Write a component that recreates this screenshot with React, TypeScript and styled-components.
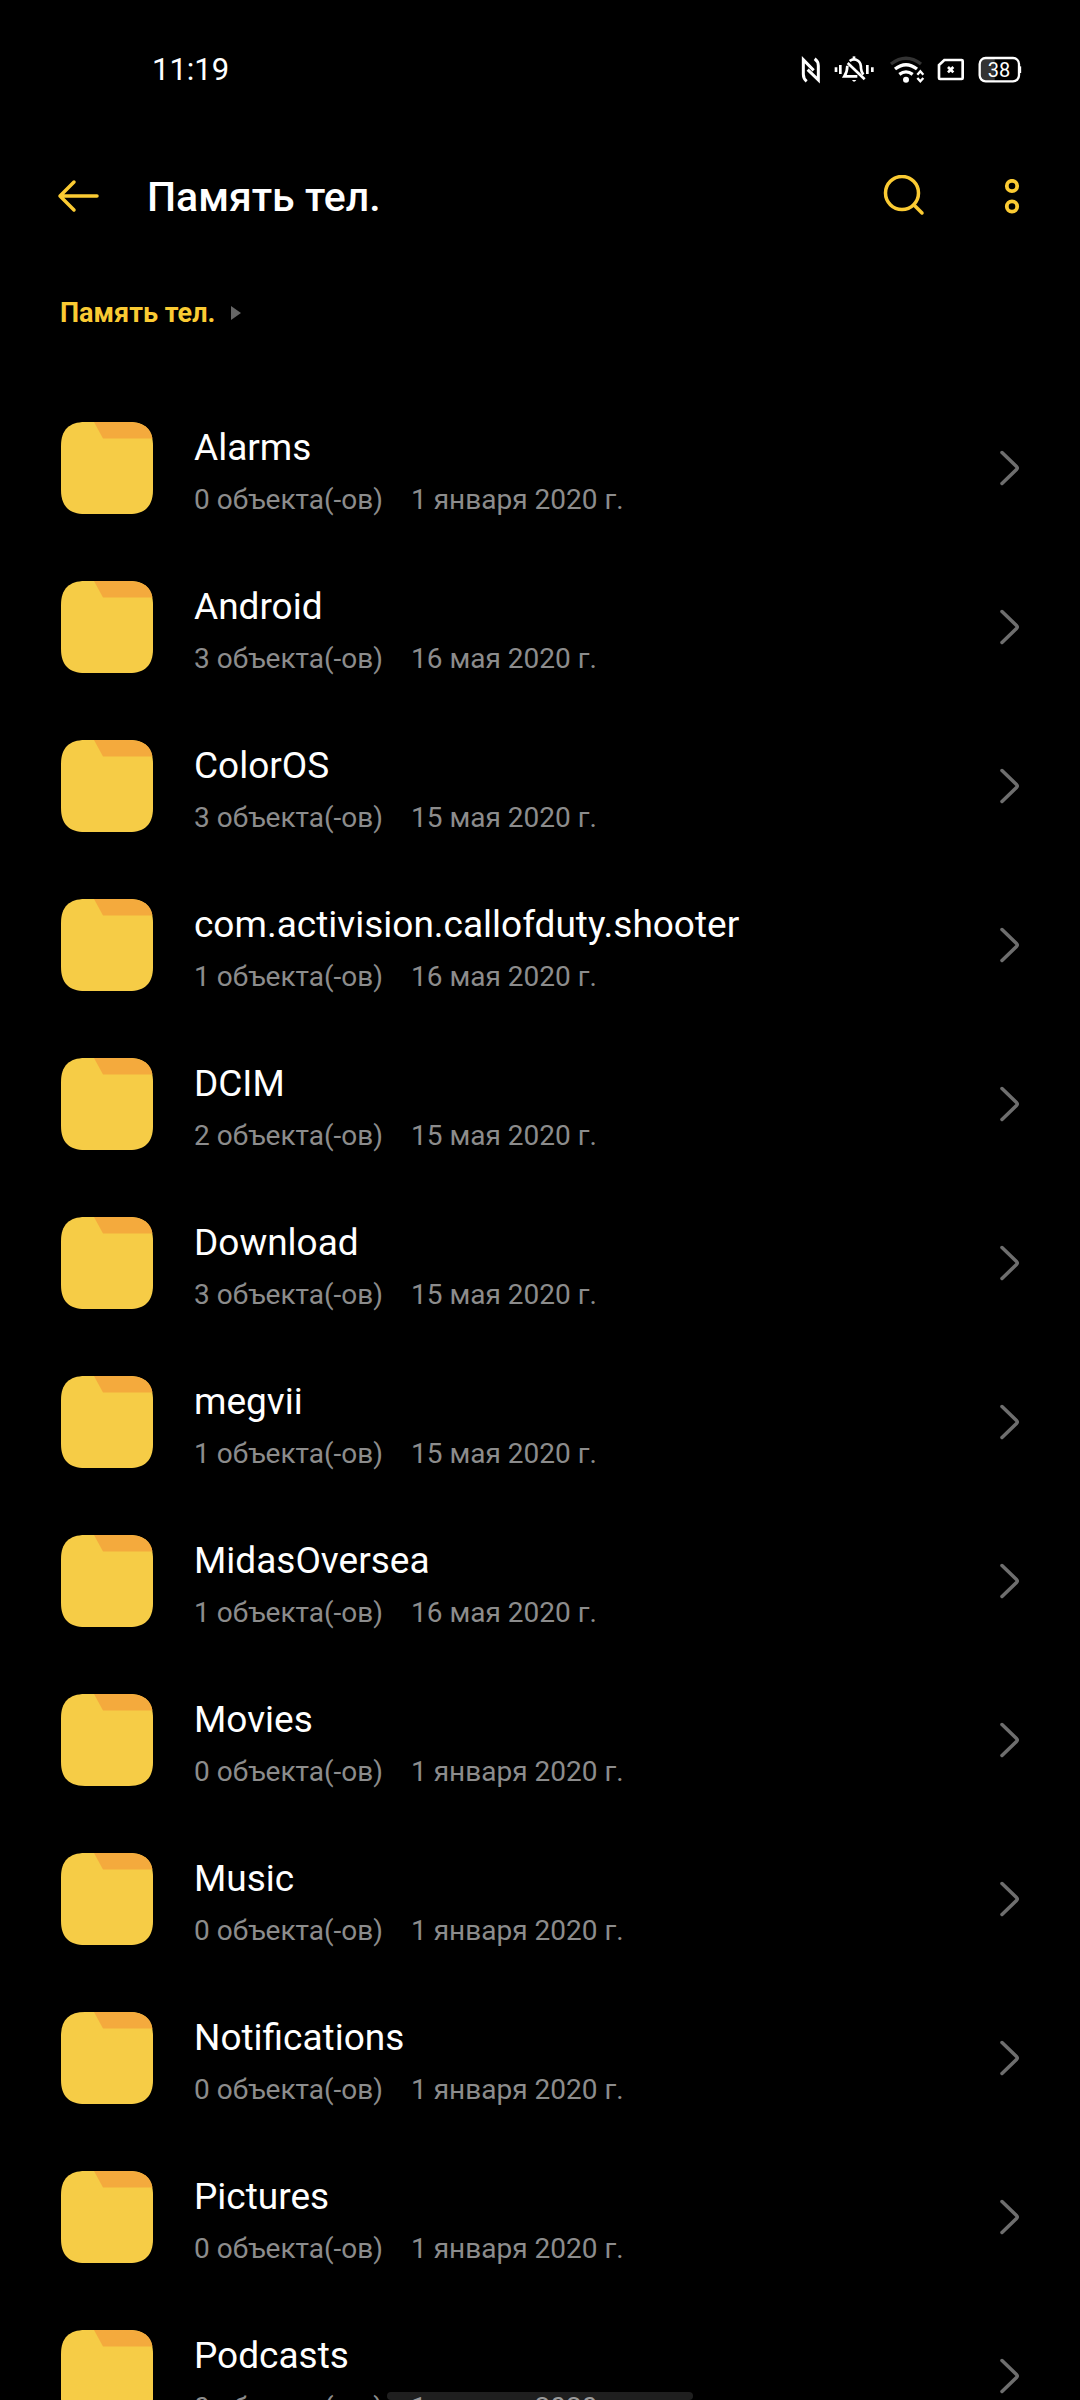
import styled, { createGlobalStyle } from "styled-components";

const GlobalStyle = createGlobalStyle`
  * {
    box-sizing: border-box;
  }
  body {
    margin: 0;
    background-color: #000000;
    font-family: Roboto, "Noto Sans", sans-serif;
  }
`;

const Screen = styled.div`
  position: relative;
  display: flex;
  flex-direction: column;
  height: 100vh;
  overflow: hidden;
  color: #ffffff;
`;
const StatusBar = styled.div`
  display: flex;
  flex-shrink: 0;
  justify-content: space-between;
  align-items: center;
  height: 131px;
  padding: 8px 57px 0 152px;
`;
const Time = styled.time`
  font-size: 31px;
  line-height: 40px;
`;
const StatusIcons = styled.div`
  display: flex;
  align-items: center;
  gap: 10px;
`;
const StatusIcon = styled.svg`
  display: block;
  height: 28px;
  fill: none;
  stroke: #ffffff;
`;
const BatteryText = styled.text`
  font-size: 60px;
  fill: #ffffff;
  stroke: none;
`;
const Header = styled.header`
  display: flex;
  flex-shrink: 0;
  align-items: center;
  height: 132px;
  padding: 0 40px;
`;
const IconButton = styled.button`
  display: flex;
  justify-content: center;
  align-items: center;
  width: 76px;
  height: 76px;
  padding: 0;
  border: none;
  background: none;
  color: #fbcb33;
  cursor: pointer;
`;
const Heading = styled.h1`
  flex: 1;
  margin: 0 0 0 31px;
  font-size: 41px;
  font-weight: 500;
  line-height: 48px;
`;
const Actions = styled.div`
  display: flex;
  gap: 32px;
  margin-right: -10px;
`;
const Breadcrumbs = styled.nav`
  display: flex;
  flex-shrink: 0;
  align-items: center;
  gap: 16px;
  padding: 34px 60px 59px;
`;
const Crumb = styled.a`
  font-size: 27px;
  font-weight: 700;
  line-height: 32px;
  color: #fbcb33;
  text-decoration: none;
`;
const List = styled.ul`
  flex: 1;
  min-height: 0;
  margin: 0;
  padding: 0;
  overflow: hidden;
  list-style: none;
`;
const Row = styled.a`
  display: flex;
  align-items: center;
  gap: 41px;
  height: 159px;
  padding: 0 60px 0 61px;
  color: #ffffff;
  text-decoration: none;
`;
const RowText = styled.div`
  display: flex;
  flex: 1;
  flex-direction: column;
  gap: 12px;
  min-width: 0;
  padding-top: 4px;
`;
const Name = styled.span`
  font-size: 37px;
  line-height: 48px;
`;
const Details = styled.span`
  display: flex;
  gap: 28px;
  font-size: 28px;
  line-height: 32px;
  color: #8c8c8c;
`;
const HomeIndicator = styled.div`
  position: absolute;
  bottom: 0;
  left: 50%;
  width: 306px;
  height: 8px;
  border-radius: 4px;
  background-color: rgba(255, 255, 255, 0.12);
  transform: translateX(-50%);
`;

const FOLDERS = [
  { name: "Alarms", count: 0, date: "1 января 2020 г." },
  { name: "Android", count: 3, date: "16 мая 2020 г." },
  { name: "ColorOS", count: 3, date: "15 мая 2020 г." },
  {
    name: "com.activision.callofduty.shooter",
    count: 1,
    date: "16 мая 2020 г.",
  },
  { name: "DCIM", count: 2, date: "15 мая 2020 г." },
  { name: "Download", count: 3, date: "15 мая 2020 г." },
  { name: "megvii", count: 1, date: "15 мая 2020 г." },
  { name: "MidasOversea", count: 1, date: "16 мая 2020 г." },
  { name: "Movies", count: 0, date: "1 января 2020 г." },
  { name: "Music", count: 0, date: "1 января 2020 г." },
  { name: "Notifications", count: 0, date: "1 января 2020 г." },
  { name: "Pictures", count: 0, date: "1 января 2020 г." },
  { name: "Podcasts", count: 0, date: "1 января 2020 г." },
];

const NfcIcon = () => (
  <StatusIcon width="21" viewBox="60 45 63 84" strokeWidth="9">
    <path d="M80 121Q70 113 70 100V56L101 88" />
    <path d="M104 53Q115 61 115 74V117L83 86" />
  </StatusIcon>
);

const SilentIcon = () => (
  <StatusIcon width="45" viewBox="153 45 135 84" strokeWidth="8">
    <path d="M168 79V93M181 72V99M262 72V99M277 79V93" />
    <path d="M203 66L254 115" />
    <path d="M202 74Q202 92 193 106H232" />
    <path d="M209 60Q222 50 235 60Q243 66 243 82Q244 94 250 101" />
    <path d="M222 46V54" />
    <path d="M216 117H229Q222 128 216 117Z" fill="#ffffff" stroke="none" />
  </StatusIcon>
);

const WifiIcon = () => (
  <StatusIcon width="40" viewBox="318 45 120 84" strokeWidth="10">
    <path d="M333 69Q378 34 423 69" stroke="#333333" />
    <path d="M345 84Q378 58 411 84" />
    <path d="M358 100Q378 85 398 100" />
    <circle cx="378" cy="116" r="9" fill="#ffffff" stroke="none" />
    <path d="M412 101L421 91L430 101M412 111L421 121L430 111" strokeWidth="7" />
  </StatusIcon>
);

const SimIcon = () => (
  <StatusIcon width="31" viewBox="468 45 93 84" strokeWidth="8">
    <path d="M493 57H545Q548 57 548 60V111Q548 114 545 114H480Q477 114 477 111V72Z" />
    <path d="M504 78L520 94M520 78L504 94" />
  </StatusIcon>
);

const BatteryIcon = () => (
  <StatusIcon width="46" viewBox="591 45 138 84" strokeWidth="7">
    <path
      d="M615 51H644V120H615Q600 120 600 105V66Q600 51 615 51Z"
      fill="#333333"
      stroke="none"
    />
    <rect x="599" y="51" width="118" height="70" rx="18" />
    <path d="M720 76V96" />
    <BatteryText x="657" y="107" textAnchor="middle">
      38
    </BatteryText>
  </StatusIcon>
);

const BackIcon = () => (
  <svg width="44" height="36" viewBox="0 0 44 36" fill="none">
    <path
      d="M18 3L4 17L18 31M4 17H41"
      stroke="currentColor"
      strokeWidth="3.5"
      strokeLinecap="round"
      strokeLinejoin="round"
    />
  </svg>
);

const SearchIcon = () => (
  <svg width="44" height="44" viewBox="0 0 44 44" fill="none">
    <g stroke="currentColor" strokeWidth="3.5" strokeLinecap="round">
      <circle cx="20" cy="18" r="16.5" />
      <path d="M32 30L40 38" />
    </g>
  </svg>
);

const MoreIcon = () => (
  <svg width="16" height="36" viewBox="0 0 16 36" fill="none">
    <g stroke="currentColor" strokeWidth="3.8">
      <circle cx="8" cy="7" r="5.2" />
      <circle cx="8" cy="27.500" r="5.2" />
    </g>
  </svg>
);

const FolderIcon = () => (
  <svg width="92" height="92" viewBox="0 0 92 92">
    <path
      d="M24 0H68C84 0 92 8 92 24V68C92 84 84 92 68 92H24C8 92 0 84 0 68V24C0 8 8 0 24 0Z"
      fill="#f6cc46"
    />
    <path d="M33 0H68C82 0 90 6 91.500 16.500H42Z" fill="#f4aa3d" />
  </svg>
);

const ChevronIcon = () => (
  <svg width="20" height="36" viewBox="0 0 20 36" fill="none">
    <path
      d="M2 2.500L16.500 16.500Q18 18 16.500 19.500L2 33.500"
      stroke="#6e6e6e"
      strokeWidth="3.5"
      strokeLinecap="round"
    />
  </svg>
);

const App = () => {
  return (
    <>
      <GlobalStyle />
      <Screen>
        <StatusBar>
          <Time>11:19</Time>
          <StatusIcons>
            <NfcIcon />
            <SilentIcon />
            <WifiIcon />
            <SimIcon />
            <BatteryIcon />
          </StatusIcons>
        </StatusBar>
        <Header>
          <IconButton aria-label="Назад">
            <BackIcon />
          </IconButton>
          <Heading>Память тел.</Heading>
          <Actions>
            <IconButton aria-label="Поиск">
              <SearchIcon />
            </IconButton>
            <IconButton aria-label="Ещё">
              <MoreIcon />
            </IconButton>
          </Actions>
        </Header>
        <Breadcrumbs>
          <Crumb href="#">Память тел.</Crumb>
          <svg width="10" height="14" viewBox="0 0 10 14">
            <path d="M0 0L10 7L0 14Z" fill="#666666" />
          </svg>
        </Breadcrumbs>
        <List>
          {FOLDERS.map(({ name, count, date }) => (
            <li key={name}>
              <Row href="#">
                <FolderIcon />
                <RowText>
                  <Name>{name}</Name>
                  <Details>
                    <span>{count} объекта(-ов)</span>
                    <span>{date}</span>
                  </Details>
                </RowText>
                <ChevronIcon />
              </Row>
            </li>
          ))}
        </List>
        <HomeIndicator />
      </Screen>
    </>
  );
};

export default App;
